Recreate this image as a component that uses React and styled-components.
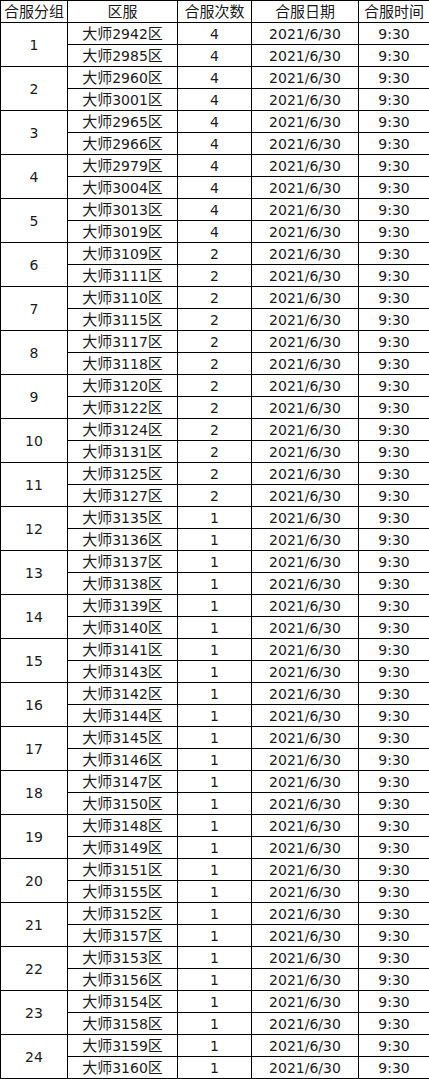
import React from 'react';
import styled, { createGlobalStyle } from 'styled-components';

const groups = [
    [1, 2942, 2985, 4],
    [2, 2960, 3001, 4],
    [3, 2965, 2966, 4],
    [4, 2979, 3004, 4],
    [5, 3013, 3019, 4],
    [6, 3109, 3111, 2],
    [7, 3110, 3115, 2],
    [8, 3117, 3118, 2],
    [9, 3120, 3122, 2],
    [10, 3124, 3131, 2],
    [11, 3125, 3127, 2],
    [12, 3135, 3136, 1],
    [13, 3137, 3138, 1],
    [14, 3139, 3140, 1],
    [15, 3141, 3143, 1],
    [16, 3142, 3144, 1],
    [17, 3145, 3146, 1],
    [18, 3147, 3150, 1],
    [19, 3148, 3149, 1],
    [20, 3151, 3155, 1],
    [21, 3152, 3157, 1],
    [22, 3153, 3156, 1],
    [23, 3154, 3158, 1],
    [24, 3159, 3160, 1],
];

const headers = ['合服分组', '区服', '合服次数', '合服日期', '合服时间'];
const widths = [67, 110, 74, 107, 71];

function Server({ num }) {
    return (
        <>
            <Cjk>大师</Cjk>{num}<Cjk>区</Cjk>
        </>
    );
}

function App() {
    return (
        <>
            <GlobalStyle />
            <Table>
                <colgroup>
                    {widths.map((w, i) => <col key={i} style={{ width: w }} />)}
                </colgroup>
                <thead>
                    <Row>
                        {headers.map((h) => <HeaderCell key={h}><Cjk>{h}</Cjk></HeaderCell>)}
                    </Row>
                </thead>
                <tbody>
                    {groups.map(([id, a, b, times]) => (
                        <React.Fragment key={id}>
                            <Row>
                                <Cell rowSpan={2}>{id}</Cell>
                                <Cell><Server num={a} /></Cell>
                                <Cell>{times}</Cell>
                                <Cell>2021/6/30</Cell>
                                <Cell>9:30</Cell>
                            </Row>
                            <Row>
                                <Cell><Server num={b} /></Cell>
                                <Cell>{times}</Cell>
                                <Cell>2021/6/30</Cell>
                                <Cell>9:30</Cell>
                            </Row>
                        </React.Fragment>
                    ))}
                </tbody>
            </Table>
        </>
    );
}

const GlobalStyle = createGlobalStyle`
  body {
    margin: 0;
    background: #fff;
  }
`;

const Table = styled.table`
  border-collapse: collapse;
  table-layout: fixed;
  width: 429px;
  font-family: "DejaVu Sans", "Noto Sans CJK SC", sans-serif;
  font-size: 14px;
  color: #1a1a1a;
`;

const Row = styled.tr`
  height: 22px;
`;

const Cjk = styled.span`
  font-family: "Noto Sans CJK SC", sans-serif;
  font-size: 15px;
`;

const HeaderCell = styled.th`
  border: 1px solid #000;
  padding: 0;
  font-weight: normal;
  text-align: center;
  vertical-align: middle;
  line-height: 20px;
  white-space: nowrap;
`;

const Cell = styled.td`
  border: 1px solid #000;
  padding: 0;
  text-align: center;
  vertical-align: middle;
  line-height: 20px;
  white-space: nowrap;
`;

export default App;
